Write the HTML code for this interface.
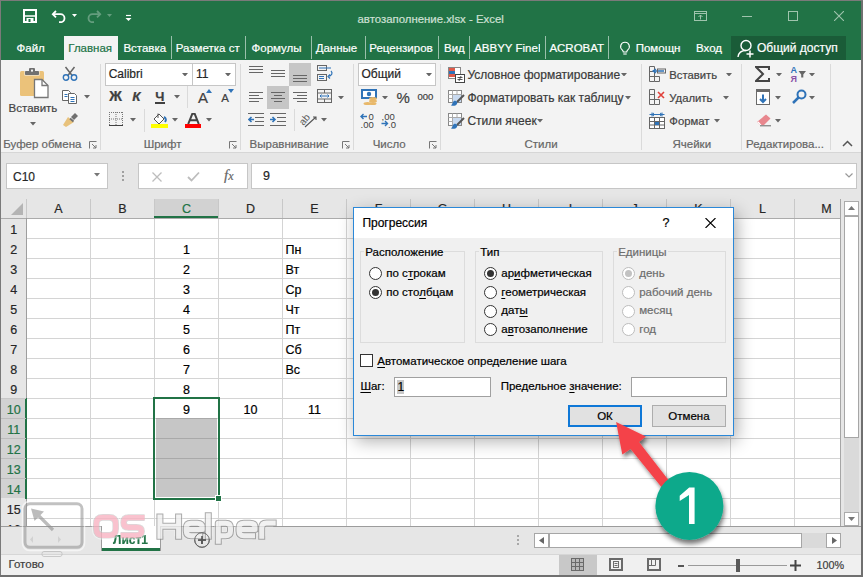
<!DOCTYPE html><html><head><meta charset="utf-8"><style>
*{margin:0;padding:0;box-sizing:border-box}
html,body{width:863px;height:577px;overflow:hidden;background:#e6e6e6;font-family:"Liberation Sans",sans-serif;position:relative}
.a{position:absolute}
.t{position:absolute;white-space:nowrap;line-height:1;-webkit-text-stroke:.2px currentColor}
u{text-decoration:underline;text-underline-offset:1.5px}
</style></head><body>
<div class="a" style="left:0px;top:0px;width:863px;height:60px;background:#217346"></div>
<svg class="a" style="left:23px;top:9px;" width="14" height="14" viewBox="0 0 14 14"><path d="M1 1H13V13H1Z" fill="none" stroke="#fff" stroke-width="2"/><path d="M1 7H13" stroke="#fff" stroke-width="1.5"/><rect x="3.5" y="9" width="7" height="4" fill="#fff"/><rect x="5.5" y="10" width="2" height="3" fill="#217346"/></svg>
<svg class="a" style="left:51px;top:9px;" width="16" height="14" viewBox="0 0 16 14"><path d="M5 2L1.8 5.2L5 8.4" fill="none" stroke="#fff" stroke-width="1.8"/><path d="M2 5.2H9.5A4 4 0 0 1 9.5 13.2H8" fill="none" stroke="#fff" stroke-width="1.8"/></svg>
<svg class="a" style="left:72.0px;top:14.0px;" width="5" height="3" viewBox="0 0 5 3"><path d="M0 0H5L2.5 3Z" fill="#fff"/></svg>
<svg class="a" style="left:86px;top:9px;opacity:.3" width="16" height="14" viewBox="0 0 16 14"><path d="M11 2L14.2 5.2L11 8.4" fill="none" stroke="#fff" stroke-width="1.8"/><path d="M14 5.2H6.5A4 4 0 0 0 6.5 13.2H8" fill="none" stroke="#fff" stroke-width="1.8"/></svg>
<svg class="a" style="left:107px;top:14px;opacity:.3" width="5" height="3" viewBox="0 0 5 3"><path d="M0 0H5L2.5 3Z" fill="#fff"/></svg>
<svg class="a" style="left:125px;top:14px;" width="7" height="8" viewBox="0 0 7 8"><path d="M1 1.5H6" stroke="#fff" stroke-width="1.2"/><path d="M.5 4H6.5L3.5 7Z" fill="#fff"/></svg>
<div class="t" style="left:357.50px;top:14.35px;font-size:11.4px;color:#cfe0d5;font-weight:400;">автозаполнение.xlsx - Excel</div>
<svg class="a" style="left:694px;top:11px;" width="13" height="10" viewBox="0 0 13 10"><rect x=".5" y=".5" width="12" height="9" fill="none" stroke="#9fc4ad"/><path d="M.5 2.5H12.5" stroke="#9fc4ad"/><path d="M6.5 8.5V4M4.5 6L6.5 4L8.5 6" fill="none" stroke="#9fc4ad"/></svg>
<div class="a" style="left:742px;top:16px;width:10px;height:1px;background:#9fc4ad"></div>
<div class="a" style="left:788px;top:11px;width:10px;height:10px;border:1px solid #9fc4ad"></div>
<svg class="a" style="left:834px;top:11px;" width="10" height="10" viewBox="0 0 10 10"><path d="M0 0L10 10M10 0L0 10" stroke="#9fc4ad" stroke-width="1.1"/></svg>
<div class="a" style="left:64px;top:36px;width:54px;height:25px;background:#f3f3f3"></div>
<div class="t" style="left:16.50px;top:42.87px;font-size:11.5px;color:#fff;font-weight:400;">Файл</div>
<div class="t" style="left:68.30px;top:42.87px;font-size:11.5px;color:#217346;font-weight:400;">Главная</div>
<div class="t" style="left:123.40px;top:42.87px;font-size:11.5px;color:#fff;font-weight:400;">Вставка</div>
<div class="a" style="left:174.8px;top:36px;width:65.69999999999999px;height:24px;overflow:hidden">
<div class="t" style="left:1px;top:6.87px;font-size:11.5px;color:#fff">Разметка страницы</div></div>
<div class="t" style="left:251.50px;top:42.87px;font-size:11.5px;color:#fff;font-weight:400;">Формулы</div>
<div class="t" style="left:315.70px;top:42.87px;font-size:11.5px;color:#fff;font-weight:400;">Данные</div>
<div class="a" style="left:368.3px;top:36px;width:64.69999999999999px;height:24px;overflow:hidden">
<div class="t" style="left:1px;top:6.87px;font-size:11.5px;color:#fff">Рецензирование</div></div>
<div class="t" style="left:444.00px;top:42.87px;font-size:11.5px;color:#fff;font-weight:400;">Вид</div>
<div class="a" style="left:473.2px;top:36px;width:66.80000000000001px;height:24px;overflow:hidden">
<div class="t" style="left:1px;top:6.87px;font-size:11.5px;color:#fff">ABBYY FineReader</div></div>
<div class="t" style="left:549.40px;top:42.87px;font-size:11.5px;color:#fff;font-weight:400;">ACROBAT</div>
<div class="a" style="left:634.7px;top:36px;width:46.799999999999955px;height:24px;overflow:hidden">
<div class="t" style="left:1px;top:6.87px;font-size:11.5px;color:#fff">Помощник</div></div>
<div class="t" style="left:696.00px;top:42.87px;font-size:11.5px;color:#fff;font-weight:400;">Вход</div>
<div class="a" style="left:170.5px;top:36px;width:1px;height:23px;background:rgba(255,255,255,.55)"></div>
<div class="a" style="left:244.5px;top:36px;width:1px;height:23px;background:rgba(255,255,255,.55)"></div>
<div class="a" style="left:310.5px;top:36px;width:1px;height:23px;background:rgba(255,255,255,.55)"></div>
<div class="a" style="left:364.5px;top:36px;width:1px;height:23px;background:rgba(255,255,255,.55)"></div>
<div class="a" style="left:438px;top:36px;width:1px;height:23px;background:rgba(255,255,255,.55)"></div>
<div class="a" style="left:469px;top:36px;width:1px;height:23px;background:rgba(255,255,255,.55)"></div>
<div class="a" style="left:544.5px;top:36px;width:1px;height:23px;background:rgba(255,255,255,.55)"></div>
<div class="a" style="left:608px;top:36px;width:1px;height:23px;background:rgba(255,255,255,.55)"></div>
<svg class="a" style="left:619px;top:41px;" width="12" height="15" viewBox="0 0 12 15"><path d="M6 1.2A4.3 4.3 0 0 0 3.2 8.8C4 9.6 4.3 10.2 4.3 11H7.7C7.7 10.2 8 9.6 8.8 8.8A4.3 4.3 0 0 0 6 1.2Z" fill="none" stroke="#fff" stroke-width="1.1"/><path d="M4.3 13H7.7" stroke="#fff" stroke-width="1.1"/></svg>
<div class="a" style="left:731px;top:36px;width:115px;height:24px;background:#1a5c38"></div>
<svg class="a" style="left:737px;top:39px;" width="18" height="19" viewBox="0 0 18 19"><circle cx="9" cy="6.5" r="5" fill="none" stroke="#fff" stroke-width="1.4"/><path d="M1 18C1.5 14 4.5 11.5 9 11.5" fill="none" stroke="#fff" stroke-width="1.4"/><path d="M13 11.5V18.5M9.5 15H16.5" stroke="#fff" stroke-width="1.5"/></svg>
<div class="t" style="left:757.00px;top:42.44px;font-size:12px;color:#fff;font-weight:400;">Общий доступ</div>
<div class="a" style="left:0px;top:60px;width:863px;height:93px;background:#f3f3f3"></div>
<div class="a" style="left:0px;top:152px;width:863px;height:1px;background:#d6d6d6"></div>
<div class="a" style="left:100px;top:64px;width:1px;height:86px;background:#dadada"></div>
<div class="a" style="left:240px;top:64px;width:1px;height:86px;background:#dadada"></div>
<div class="a" style="left:353px;top:64px;width:1px;height:86px;background:#dadada"></div>
<div class="a" style="left:440px;top:64px;width:1px;height:86px;background:#dadada"></div>
<div class="a" style="left:641px;top:64px;width:1px;height:86px;background:#dadada"></div>
<div class="a" style="left:741px;top:64px;width:1px;height:86px;background:#dadada"></div>
<div class="a" style="left:830px;top:64px;width:1px;height:86px;background:#dadada"></div>
<svg class="a" style="left:19px;top:66px;" width="31" height="33" viewBox="0 0 31 33"><rect x="1" y="5" width="24" height="25" rx="1.5" fill="#ebc27a"/><rect x="5.5" y="4.5" width="15" height="5" fill="#f3f3f3"/><rect x="6" y="5" width="14" height="4" rx=".8" fill="#707070"/><rect x="10" y="2" width="6" height="4" rx="1" fill="#707070"/><rect x="12" y="3.6" width="2" height="2" fill="#f3f3f3"/><path d="M15.5 13.5H23L29 19.5V31.5H15.5Z" fill="#fff" stroke="#777" stroke-width="1.3"/><path d="M23 13.5V19.5H29" fill="none" stroke="#777" stroke-width="1.3"/></svg>
<div class="t" style="left:8.60px;top:103.47px;font-size:11.5px;color:#444;font-weight:400;">Вставить</div>
<svg class="a" style="left:29.5px;top:122.25px;" width="6" height="3.5" viewBox="0 0 6 3.5"><path d="M0 0H6L3.0 3.5Z" fill="#666"/></svg>
<svg class="a" style="left:62px;top:66px;" width="16" height="15" viewBox="0 0 16 15"><path d="M3.5 1L10.5 10M12.5 1L5.5 10" stroke="#666" stroke-width="1.5"/><circle cx="4" cy="11.5" r="2.7" fill="none" stroke="#2f73b8" stroke-width="1.4"/><circle cx="12" cy="11.5" r="2.7" fill="none" stroke="#2f73b8" stroke-width="1.4"/></svg>
<svg class="a" style="left:62px;top:90px;" width="16" height="14" viewBox="0 0 16 14"><path d="M.5 .5H6.5L8.5 2.5V10.5H.5Z" fill="#fff" stroke="#666"/><path d="M6.5 3.5H12.5L14.5 5.5V13.5H6.5Z" fill="#fff" stroke="#666"/><path d="M2.5 4.5H5.5M2.5 6.5H5.5M8.5 7.5H12.5M8.5 9.5H12.5M8.5 11.5H12.5" stroke="#2f73b8"/></svg>
<svg class="a" style="left:83.7px;top:95.25px;" width="6" height="3.5" viewBox="0 0 6 3.5"><path d="M0 0H6L3.0 3.5Z" fill="#666"/></svg>
<svg class="a" style="left:62px;top:112px;" width="17" height="15" viewBox="0 0 17 15"><path d="M9 5L13 1L16 4L12 8Z" fill="#707070"/><path d="M1 13L6 5L12 10L4 15Z" fill="#e8c27c"/><path d="M8 6.5L11.5 9.5" stroke="#707070" stroke-width="2"/></svg>
<div class="t" style="left:-157.70px;width:400px;text-align:center;top:139.07px;font-size:11.5px;color:#666;font-weight:400;">Буфер обмена</div>
<svg class="a" style="left:88.5px;top:141px;" width="8" height="8" viewBox="0 0 8 8"><path d="M.5 7.5V.5H7.5" fill="none" stroke="#777"/><path d="M3 3L7 7M7 4V7H4" fill="none" stroke="#777"/></svg>
<div class="a" style="left:105px;top:63px;width:88px;height:23px;background:#fff;border:1px solid #c6c6c6"></div>
<div class="a" style="left:192px;top:63px;width:44px;height:23px;background:#fff;border:1px solid #c6c6c6"></div>
<div class="t" style="left:108.70px;top:68.34px;font-size:12px;color:#262626;font-weight:400;">Calibri</div>
<div class="t" style="left:196.00px;top:68.34px;font-size:12px;color:#262626;font-weight:400;">11</div>
<svg class="a" style="left:182.2px;top:72.75px;" width="6" height="3.5" viewBox="0 0 6 3.5"><path d="M0 0H6L3.0 3.5Z" fill="#666"/></svg>
<svg class="a" style="left:225.3px;top:72.75px;" width="6" height="3.5" viewBox="0 0 6 3.5"><path d="M0 0H6L3.0 3.5Z" fill="#666"/></svg>
<div class="t" style="left:109.30px;top:89.35px;font-size:14px;color:#404040;font-weight:700;">Ж</div>
<div class="t" style="left:132.30px;top:89.77px;font-size:13.5px;color:#404040;font-weight:700;font-style:italic">К</div>
<div class="t" style="left:155.30px;top:90.20px;font-size:13px;color:#404040;font-weight:700;">Ч</div>
<div class="a" style="left:155px;top:102px;width:10px;height:1.5px;background:#404040"></div>
<svg class="a" style="left:173.5px;top:95.25px;" width="6" height="3.5" viewBox="0 0 6 3.5"><path d="M0 0H6L3.0 3.5Z" fill="#666"/></svg>
<div class="a" style="left:187px;top:86px;width:1px;height:22px;background:#dadada"></div>
<div class="t" style="left:198.00px;top:90.10px;font-size:15px;color:#404040;font-weight:400;">A</div>
<svg class="a" style="left:206px;top:89px;" width="6" height="4" viewBox="0 0 6 4"><path d="M0 4L3 0L6 4Z" fill="#2f73b8"/></svg>
<div class="t" style="left:221.20px;top:93.07px;font-size:11.5px;color:#404040;font-weight:400;">A</div>
<svg class="a" style="left:228px;top:89px;" width="6" height="4" viewBox="0 0 6 4"><path d="M0 0L6 0L3 4Z" fill="#2f73b8"/></svg>
<svg class="a" style="left:109px;top:112px;" width="14" height="14" viewBox="0 0 14 14"><path d="M.5 0V13M13.5 0V13M7 0V13M0 .5H14M0 7H14" fill="none" stroke="#777" stroke-dasharray="1 1"/><path d="M0 13.5H14" stroke="#404040"/></svg>
<svg class="a" style="left:129.5px;top:118.25px;" width="6" height="3.5" viewBox="0 0 6 3.5"><path d="M0 0H6L3.0 3.5Z" fill="#666"/></svg>
<div class="a" style="left:143.5px;top:109px;width:1px;height:23px;background:#dadada"></div>
<svg class="a" style="left:151px;top:112px;" width="17" height="16" viewBox="0 0 17 16"><path d="M3 7L8 2L13 7L8 12Z" fill="#fff" stroke="#555"/><path d="M7 1.5V6" stroke="#555"/><path d="M13 5C15 6 15.5 8 14 10" fill="none" stroke="#2f73b8" stroke-width="2"/><rect x="0" y="12" width="17" height="4" fill="#ffff00"/></svg>
<svg class="a" style="left:172.0px;top:118.25px;" width="6" height="3.5" viewBox="0 0 6 3.5"><path d="M0 0H6L3.0 3.5Z" fill="#666"/></svg>
<svg class="a" style="left:187px;top:113px;" width="13" height="11" viewBox="0 0 13 11"><path d="M1.2 11L5.3 .8H7.7L11.8 11M3.3 7.3H9.7" fill="none" stroke="#444" stroke-width="2"/></svg>
<div class="a" style="left:185px;top:124px;width:16px;height:3.5px;background:#ff0000"></div>
<svg class="a" style="left:206.2px;top:118.25px;" width="6" height="3.5" viewBox="0 0 6 3.5"><path d="M0 0H6L3.0 3.5Z" fill="#666"/></svg>
<div class="t" style="left:-37.40px;width:400px;text-align:center;top:139.07px;font-size:11.5px;color:#666;font-weight:400;">Шрифт</div>
<svg class="a" style="left:229px;top:141px;" width="8" height="8" viewBox="0 0 8 8"><path d="M.5 7.5V.5H7.5" fill="none" stroke="#777"/><path d="M3 3L7 7M7 4V7H4" fill="none" stroke="#777"/></svg>
<div class="a" style="left:289px;top:63px;width:22px;height:23px;background:#c6c6c6"></div>
<div class="a" style="left:267px;top:86px;width:22px;height:23px;background:#c6c6c6"></div>
<div class="a" style="left:249px;top:66px;width:14px;height:1px;background:#666"></div>
<div class="a" style="left:249px;top:69px;width:14px;height:1px;background:#666"></div>
<div class="a" style="left:249px;top:72px;width:14px;height:1px;background:#666"></div>
<div class="a" style="left:271px;top:70px;width:14px;height:1px;background:#666"></div>
<div class="a" style="left:271px;top:73px;width:14px;height:1px;background:#666"></div>
<div class="a" style="left:271px;top:76px;width:14px;height:1px;background:#666"></div>
<div class="a" style="left:293px;top:75px;width:14px;height:1px;background:#666"></div>
<div class="a" style="left:293px;top:78px;width:14px;height:1px;background:#666"></div>
<div class="a" style="left:293px;top:81px;width:14px;height:1px;background:#666"></div>
<div class="a" style="left:249px;top:92px;width:14px;height:1px;background:#666"></div>
<div class="a" style="left:249px;top:95px;width:10px;height:1px;background:#666"></div>
<div class="a" style="left:249px;top:98px;width:14px;height:1px;background:#666"></div>
<div class="a" style="left:249px;top:101px;width:10px;height:1px;background:#666"></div>
<div class="a" style="left:271px;top:92px;width:14px;height:1px;background:#666"></div>
<div class="a" style="left:274px;top:95px;width:8px;height:1px;background:#666"></div>
<div class="a" style="left:271px;top:98px;width:14px;height:1px;background:#666"></div>
<div class="a" style="left:274px;top:101px;width:8px;height:1px;background:#666"></div>
<div class="a" style="left:293px;top:92px;width:14px;height:1px;background:#666"></div>
<div class="a" style="left:297px;top:95px;width:10px;height:1px;background:#666"></div>
<div class="a" style="left:293px;top:98px;width:14px;height:1px;background:#666"></div>
<div class="a" style="left:297px;top:101px;width:10px;height:1px;background:#666"></div>
<svg class="a" style="left:317px;top:65px;" width="17" height="16" viewBox="0 0 17 16"><rect x=".5" y=".5" width="9" height="5" fill="none" stroke="#666"/><rect x=".5" y="9.5" width="9" height="6" fill="none" stroke="#666"/><path d="M2 3H14" stroke="#2f73b8"/><path d="M2 11.5H7M2 13.5H7" stroke="#2f73b8"/><path d="M14 6C16 8 15 11 11 11.5M13 9.5L11 11.5L13 13.5" fill="none" stroke="#2f73b8" stroke-width="1.2"/></svg>
<svg class="a" style="left:317px;top:89px;" width="16" height="15" viewBox="0 0 16 15"><rect x=".5" y=".5" width="14" height="13" fill="none" stroke="#666"/><path d="M.5 4H14.5M.5 10H14.5M7.5 .5V4M7.5 10V13.5" stroke="#666"/><path d="M3 7H12" stroke="#2f73b8"/><path d="M4.5 5.5L3 7L4.5 8.5M10.5 5.5L12 7L10.5 8.5" fill="none" stroke="#2f73b8"/></svg>
<svg class="a" style="left:337.5px;top:95.55px;" width="6" height="3.5" viewBox="0 0 6 3.5"><path d="M0 0H6L3.0 3.5Z" fill="#666"/></svg>
<svg class="a" style="left:248px;top:113px;" width="17" height="13" viewBox="0 0 17 13"><path d="M0 .5H16M7 4.5H16M7 8.5H16M0 12.5H16" stroke="#666"/><path d="M1 6.5H6M3.5 4L1 6.5L3.5 9" fill="none" stroke="#2f73b8" stroke-width="1.6"/></svg>
<svg class="a" style="left:270px;top:113px;" width="17" height="13" viewBox="0 0 17 13"><path d="M0 .5H16M7 4.5H16M7 8.5H16M0 12.5H16" stroke="#666"/><path d="M0 6.5H5M2.5 4L5 6.5L2.5 9" fill="none" stroke="#2f73b8" stroke-width="1.6"/></svg>
<div class="a" style="left:293.5px;top:109px;width:1px;height:22px;background:#dadada"></div>
<svg class="a" style="left:300px;top:112px;" width="18" height="16" viewBox="0 0 18 16"><text x="0" y="0" font-size="10" font-family="Liberation Sans" fill="#555" transform="translate(3.5,14) rotate(-50)">ab</text><path d="M5 15L16 5M13 5H16V8" fill="none" stroke="#555" stroke-width="1.1"/></svg>
<svg class="a" style="left:320.6px;top:118.25px;" width="6" height="3.5" viewBox="0 0 6 3.5"><path d="M0 0H6L3.0 3.5Z" fill="#666"/></svg>
<div class="t" style="left:89.20px;width:400px;text-align:center;top:139.07px;font-size:11.5px;color:#666;font-weight:400;">Выравнивание</div>
<svg class="a" style="left:342px;top:141px;" width="8" height="8" viewBox="0 0 8 8"><path d="M.5 7.5V.5H7.5" fill="none" stroke="#777"/><path d="M3 3L7 7M7 4V7H4" fill="none" stroke="#777"/></svg>
<div class="a" style="left:358px;top:63px;width:78px;height:23px;background:#fff;border:1px solid #c6c6c6"></div>
<div class="t" style="left:361.50px;top:68.34px;font-size:12px;color:#262626;font-weight:400;">Общий</div>
<svg class="a" style="left:425.5px;top:72.75px;" width="6" height="3.5" viewBox="0 0 6 3.5"><path d="M0 0H6L3.0 3.5Z" fill="#666"/></svg>
<svg class="a" style="left:361px;top:89px;" width="17" height="17" viewBox="0 0 17 17"><rect x="1" y="1" width="14" height="8" fill="#fff" stroke="#2f73b8" stroke-width="2"/><circle cx="8" cy="5" r="2.2" fill="#2f73b8"/><ellipse cx="12" cy="9.5" rx="4" ry="1.6" fill="#e8b86a"/><ellipse cx="12" cy="12" rx="4" ry="1.6" fill="#e8b86a"/><ellipse cx="6.5" cy="14.5" rx="4" ry="1.6" fill="#e8b86a"/><ellipse cx="12" cy="14.5" rx="3.5" ry="1.6" fill="#e8b86a"/></svg>
<svg class="a" style="left:382.2px;top:95.65px;" width="6" height="3.5" viewBox="0 0 6 3.5"><path d="M0 0H6L3.0 3.5Z" fill="#666"/></svg>
<div class="t" style="left:396.50px;top:90.00px;font-size:15px;color:#404040;font-weight:400;">%</div>
<div class="t" style="left:417.50px;top:92.16px;font-size:9.5px;color:#404040;font-weight:400;">000</div>
<svg class="a" style="left:360px;top:112px;" width="18" height="16" viewBox="0 0 18 16"><path d="M1 4.5H7M3.5 2L1 4.5L3.5 7" fill="none" stroke="#2f73b8" stroke-width="1.4"/><text x="8.5" y="8" font-size="9.5" font-family="Liberation Sans" fill="#404040">0</text><text x="0.5" y="15.5" font-size="9.5" font-family="Liberation Sans" fill="#404040">,00</text></svg>
<svg class="a" style="left:381px;top:112px;" width="18" height="16" viewBox="0 0 18 16"><text x="0.5" y="8" font-size="9.5" font-family="Liberation Sans" fill="#404040">,00</text><path d="M0.5 11.5H6.5M4 9L6.5 11.5L4 14" fill="none" stroke="#2f73b8" stroke-width="1.4"/><text x="7" y="15.5" font-size="9.5" font-family="Liberation Sans" fill="#404040">,0</text></svg>
<div class="t" style="left:189.20px;width:400px;text-align:center;top:139.07px;font-size:11.5px;color:#666;font-weight:400;">Число</div>
<svg class="a" style="left:429px;top:141px;" width="8" height="8" viewBox="0 0 8 8"><path d="M.5 7.5V.5H7.5" fill="none" stroke="#777"/><path d="M3 3L7 7M7 4V7H4" fill="none" stroke="#777"/></svg>
<svg class="a" style="left:448px;top:67px;" width="17" height="16" viewBox="0 0 17 16"><rect x=".5" y=".5" width="12" height="11" fill="#fff" stroke="#888"/><rect x="1" y="1" width="6" height="3" fill="#e05a4a"/><rect x="1" y="4" width="6" height="3" fill="#2f73b8"/><rect x="1" y="7" width="6" height="3" fill="#e05a4a"/><rect x="7.5" y="7.5" width="9" height="8" fill="#fff" stroke="#444"/><path d="M9.5 10.5H14.5M9.5 12.5H14.5M13 9L11 14" stroke="#444" stroke-width=".9"/></svg>
<div class="t" style="left:467.40px;top:69.04px;font-size:12px;color:#3a3a3a;font-weight:400;">Условное форматирование</div>
<svg class="a" style="left:621.0px;top:72.75px;" width="6" height="3.5" viewBox="0 0 6 3.5"><path d="M0 0H6L3.0 3.5Z" fill="#666"/></svg>
<svg class="a" style="left:448px;top:90px;" width="17" height="16" viewBox="0 0 17 16"><rect x=".5" y=".5" width="13" height="12" fill="#fff" stroke="#888"/><path d="M.5 4.5H13.5M.5 8.5H13.5M4.5 .5V12.5M9 .5V12.5" stroke="#aaa"/><rect x="5" y="5" width="8" height="7" fill="#c9daf0"/><path d="M16 5L9 12" stroke="#555" stroke-width="2"/><path d="M6 11C8 10 10 12 9 14C8 16 5 16 3 15.5C5 14 4 12 6 11Z" fill="#2f73b8"/></svg>
<div class="t" style="left:467.40px;top:92.24px;font-size:12px;color:#3a3a3a;font-weight:400;">Форматировать как таблицу</div>
<svg class="a" style="left:625.0px;top:96.05px;" width="6" height="3.5" viewBox="0 0 6 3.5"><path d="M0 0H6L3.0 3.5Z" fill="#666"/></svg>
<svg class="a" style="left:448px;top:113px;" width="17" height="16" viewBox="0 0 17 16"><rect x=".5" y=".5" width="13" height="12" fill="#fff" stroke="#888"/><path d="M.5 4.5H13.5M.5 8.5H13.5M4.5 .5V12.5M9 .5V12.5" stroke="#aaa"/><rect x="5" y="5" width="8" height="7" fill="#c9daf0"/><path d="M16 5L9 12" stroke="#555" stroke-width="2"/><path d="M6 11C8 10 10 12 9 14C8 16 5 16 3 15.5C5 14 4 12 6 11Z" fill="#2f73b8"/></svg>
<div class="t" style="left:467.40px;top:115.44px;font-size:12px;color:#3a3a3a;font-weight:400;">Стили ячеек</div>
<svg class="a" style="left:537.0px;top:119.25px;" width="6" height="3.5" viewBox="0 0 6 3.5"><path d="M0 0H6L3.0 3.5Z" fill="#666"/></svg>
<div class="t" style="left:341.00px;width:400px;text-align:center;top:139.07px;font-size:11.5px;color:#666;font-weight:400;">Стили</div>
<svg class="a" style="left:649px;top:66px;" width="17" height="16" viewBox="0 0 17 16"><path d="M.5 .5H5.5V15.5H.5ZM.5 5.5H5.5M.5 10.5H5.5M5.5 10.5H10.5V15.5H5.5" fill="none" stroke="#666"/><path d="M4 5H15M7 3L4 5L7 7" fill="none" stroke="#2f73b8" stroke-width="1.3"/><rect x="8.5" y="3" width="8" height="4" fill="none" stroke="#666"/></svg>
<div class="t" style="left:669.30px;top:69.63px;font-size:11.3px;color:#444;font-weight:400;">Вставить</div>
<svg class="a" style="left:726.3px;top:72.75px;" width="6" height="3.5" viewBox="0 0 6 3.5"><path d="M0 0H6L3.0 3.5Z" fill="#666"/></svg>
<svg class="a" style="left:649px;top:89px;" width="17" height="16" viewBox="0 0 17 16"><path d="M.5 .5H5.5V15.5H.5ZM.5 5.5H5.5M.5 10.5H5.5M5.5 10.5H10.5V15.5H5.5" fill="none" stroke="#666"/><path d="M9 3L15 9M15 3L9 9" stroke="#e0403a" stroke-width="1.6"/></svg>
<div class="t" style="left:669.30px;top:92.83px;font-size:11.3px;color:#444;font-weight:400;">Удалить</div>
<svg class="a" style="left:722.5px;top:96.05px;" width="6" height="3.5" viewBox="0 0 6 3.5"><path d="M0 0H6L3.0 3.5Z" fill="#666"/></svg>
<svg class="a" style="left:649px;top:112px;" width="17" height="17" viewBox="0 0 17 17"><path d="M.5 2.5H15.5M3 .5V4.5M13 .5V4.5M5 1L3 2.5L5 4M11 1L13 2.5L11 4" fill="none" stroke="#2f73b8"/><rect x=".5" y="5.5" width="15" height="11" fill="#fff" stroke="#666"/><path d="M.5 9.5H15.5M.5 13H15.5M5.5 5.5V16.5M10.5 5.5V16.5" stroke="#666"/><rect x="6" y="10" width="4" height="3" fill="#2f73b8"/></svg>
<div class="t" style="left:669.30px;top:116.03px;font-size:11.3px;color:#444;font-weight:400;">Формат</div>
<svg class="a" style="left:714.0px;top:119.25px;" width="6" height="3.5" viewBox="0 0 6 3.5"><path d="M0 0H6L3.0 3.5Z" fill="#666"/></svg>
<div class="t" style="left:491.80px;width:400px;text-align:center;top:139.07px;font-size:11.5px;color:#666;font-weight:400;">Ячейки</div>
<svg class="a" style="left:755px;top:66px;" width="16" height="16" viewBox="0 0 16 16"><path d="M1 1H14V4M14 1H1L8 8L1 15H14V12" fill="none" stroke="#444" stroke-width="2"/></svg>
<svg class="a" style="left:776.0px;top:72.75px;" width="6" height="3.5" viewBox="0 0 6 3.5"><path d="M0 0H6L3.0 3.5Z" fill="#666"/></svg>
<svg class="a" style="left:789px;top:65px;" width="19" height="18" viewBox="0 0 19 18"><text x="1.5" y="7.5" font-size="9" font-weight="700" font-family="Liberation Sans" fill="#2f73b8">A</text><text x="1.5" y="16.8" font-size="9" font-weight="700" font-family="Liberation Sans" fill="#8a52a8">Я</text><path d="M9.5 6H17L14.3 9.5V12.5H12.2V9.5Z" fill="#666"/></svg>
<svg class="a" style="left:809.0px;top:72.75px;" width="6" height="3.5" viewBox="0 0 6 3.5"><path d="M0 0H6L3.0 3.5Z" fill="#666"/></svg>
<svg class="a" style="left:756px;top:89px;" width="15" height="16" viewBox="0 0 15 16"><rect x=".5" y=".5" width="13" height="15" fill="#fff" stroke="#6a6a6a"/><rect x="0" y="0" width="14" height="3" fill="#6a6a6a"/><path d="M7 5.5V13M4 10L7 13L10 10" fill="none" stroke="#2f73b8" stroke-width="2"/></svg>
<svg class="a" style="left:774.5px;top:96.05px;" width="6" height="3.5" viewBox="0 0 6 3.5"><path d="M0 0H6L3.0 3.5Z" fill="#666"/></svg>
<svg class="a" style="left:792px;top:89px;" width="15" height="15" viewBox="0 0 15 15"><circle cx="9.5" cy="5.5" r="4" fill="none" stroke="#2f73b8" stroke-width="2"/><path d="M6.5 8.5L1 14" stroke="#2f73b8" stroke-width="2.5"/></svg>
<svg class="a" style="left:809.0px;top:96.05px;" width="6" height="3.5" viewBox="0 0 6 3.5"><path d="M0 0H6L3.0 3.5Z" fill="#666"/></svg>
<svg class="a" style="left:755px;top:113px;" width="17" height="14" viewBox="0 0 17 14"><path d="M11 1.5L15.5 5.5L9 12H5L2 9Z" fill="#e8878e"/><path d="M2 9L5 12H6.5L3.5 8.5Z" fill="#fff"/><path d="M5 12.8H16" stroke="#666"/></svg>
<svg class="a" style="left:774.5px;top:119.25px;" width="6" height="3.5" viewBox="0 0 6 3.5"><path d="M0 0H6L3.0 3.5Z" fill="#666"/></svg>
<div class="t" style="left:585.00px;width:400px;text-align:center;top:139.07px;font-size:11.5px;color:#666;font-weight:400;">Редактирова...</div>
<svg class="a" style="left:842px;top:140px;" width="11" height="7" viewBox="0 0 11 7"><path d="M1 6L5.5 1.5L10 6" fill="none" stroke="#555" stroke-width="1.5"/></svg>
<div class="a" style="left:6px;top:163px;width:102px;height:26px;background:#fff;border:1px solid #c6c6c6"></div>
<div class="t" style="left:13.00px;top:170.84px;font-size:12px;color:#262626;font-weight:400;">C10</div>
<svg class="a" style="left:94.0px;top:173.25px;" width="6" height="3.5" viewBox="0 0 6 3.5"><path d="M0 0H6L3.0 3.5Z" fill="#777"/></svg>
<div class="a" style="left:122px;top:171px;width:2px;height:2px;background:#a0a0a0"></div>
<div class="a" style="left:122px;top:175px;width:2px;height:2px;background:#a0a0a0"></div>
<div class="a" style="left:122px;top:179px;width:2px;height:2px;background:#a0a0a0"></div>
<div class="a" style="left:138px;top:163px;width:110px;height:26px;background:#fff;border:1px solid #c6c6c6"></div>
<svg class="a" style="left:152px;top:172px;" width="10" height="10" viewBox="0 0 10 10"><path d="M.5 .5L9.5 9.5M9.5 .5L.5 9.5" stroke="#bdbdbd" stroke-width="1.3"/></svg>
<svg class="a" style="left:187px;top:171px;" width="13" height="11" viewBox="0 0 13 11"><path d="M1 6L4.5 9.5L12 1.5" fill="none" stroke="#bdbdbd" stroke-width="1.8"/></svg>
<div class="t" style="left:224.00px;top:168.30px;font-size:15px;color:#666;font-weight:400;font-family:Liberation Serif"><i>f</i><i style="font-size:12px;margin-left:0px">x</i></div>
<div class="a" style="left:251px;top:163px;width:606px;height:26px;background:#fff;border:1px solid #c6c6c6"></div>
<div class="t" style="left:263.00px;top:170.42px;font-size:12.5px;color:#262626;font-weight:400;">9</div>
<svg class="a" style="left:845px;top:173px;" width="8" height="5" viewBox="0 0 8 5"><path d="M.5 .5L4 4L7.5 .5" fill="none" stroke="#999" stroke-width="1.2"/></svg>
<div class="a" style="left:0px;top:199px;width:840px;height:19px;background:#e6e6e6"></div>
<div class="a" style="left:0px;top:218px;width:26px;height:308px;background:#e6e6e6"></div>
<div class="a" style="left:26px;top:218px;width:814px;height:308px;background:#fff"></div>
<div class="a" style="left:154px;top:199px;width:64px;height:19px;background:#d2d2d2"></div>
<div class="a" style="left:0px;top:398px;width:26px;height:100px;background:#d2d2d2"></div>
<svg class="a" style="left:11px;top:203px;" width="12" height="12" viewBox="0 0 12 12"><path d="M12 0V12H0Z" fill="#b4b4b4"/></svg>
<div class="a" style="left:90px;top:199px;width:1px;height:19px;background:#c8c8c8"></div>
<div class="a" style="left:154px;top:199px;width:1px;height:19px;background:#c8c8c8"></div>
<div class="a" style="left:218px;top:199px;width:1px;height:19px;background:#c8c8c8"></div>
<div class="a" style="left:282px;top:199px;width:1px;height:19px;background:#c8c8c8"></div>
<div class="a" style="left:346px;top:199px;width:1px;height:19px;background:#c8c8c8"></div>
<div class="a" style="left:410px;top:199px;width:1px;height:19px;background:#c8c8c8"></div>
<div class="a" style="left:474px;top:199px;width:1px;height:19px;background:#c8c8c8"></div>
<div class="a" style="left:538px;top:199px;width:1px;height:19px;background:#c8c8c8"></div>
<div class="a" style="left:602px;top:199px;width:1px;height:19px;background:#c8c8c8"></div>
<div class="a" style="left:666px;top:199px;width:1px;height:19px;background:#c8c8c8"></div>
<div class="a" style="left:730px;top:199px;width:1px;height:19px;background:#c8c8c8"></div>
<div class="a" style="left:794px;top:199px;width:1px;height:19px;background:#c8c8c8"></div>
<div class="a" style="left:26px;top:199px;width:1px;height:19px;background:#c8c8c8"></div>
<div class="a" style="left:0px;top:218px;width:840px;height:1px;background:#ababab"></div>
<div class="a" style="left:154px;top:216px;width:64px;height:2px;background:#217346"></div>
<div class="a" style="left:26px;top:218px;width:1px;height:308px;background:#9e9e9e"></div>
<div class="a" style="left:25px;top:398px;width:2px;height:101px;background:#217346"></div>
<div class="t" style="left:-141.50px;width:400px;text-align:center;top:203.42px;font-size:12.5px;color:#262626;font-weight:400;">A</div>
<div class="t" style="left:-77.50px;width:400px;text-align:center;top:203.42px;font-size:12.5px;color:#262626;font-weight:400;">B</div>
<div class="t" style="left:-13.50px;width:400px;text-align:center;top:203.42px;font-size:12.5px;color:#217346;font-weight:400;">C</div>
<div class="t" style="left:50.50px;width:400px;text-align:center;top:203.42px;font-size:12.5px;color:#262626;font-weight:400;">D</div>
<div class="t" style="left:114.50px;width:400px;text-align:center;top:203.42px;font-size:12.5px;color:#262626;font-weight:400;">E</div>
<div class="t" style="left:178.50px;width:400px;text-align:center;top:203.42px;font-size:12.5px;color:#262626;font-weight:400;">F</div>
<div class="t" style="left:242.50px;width:400px;text-align:center;top:203.42px;font-size:12.5px;color:#262626;font-weight:400;">G</div>
<div class="t" style="left:306.50px;width:400px;text-align:center;top:203.42px;font-size:12.5px;color:#262626;font-weight:400;">H</div>
<div class="t" style="left:370.50px;width:400px;text-align:center;top:203.42px;font-size:12.5px;color:#262626;font-weight:400;">I</div>
<div class="t" style="left:434.50px;width:400px;text-align:center;top:203.42px;font-size:12.5px;color:#262626;font-weight:400;">J</div>
<div class="t" style="left:498.50px;width:400px;text-align:center;top:203.42px;font-size:12.5px;color:#262626;font-weight:400;">K</div>
<div class="t" style="left:562.50px;width:400px;text-align:center;top:203.42px;font-size:12.5px;color:#262626;font-weight:400;">L</div>
<div class="t" style="left:626.50px;width:400px;text-align:center;top:203.42px;font-size:12.5px;color:#262626;font-weight:400;">M</div>
<div class="a" style="left:90px;top:219px;width:1px;height:307px;background:#d4d4d4"></div>
<div class="a" style="left:154px;top:219px;width:1px;height:307px;background:#d4d4d4"></div>
<div class="a" style="left:218px;top:219px;width:1px;height:307px;background:#d4d4d4"></div>
<div class="a" style="left:282px;top:219px;width:1px;height:307px;background:#d4d4d4"></div>
<div class="a" style="left:346px;top:219px;width:1px;height:307px;background:#d4d4d4"></div>
<div class="a" style="left:410px;top:219px;width:1px;height:307px;background:#d4d4d4"></div>
<div class="a" style="left:474px;top:219px;width:1px;height:307px;background:#d4d4d4"></div>
<div class="a" style="left:538px;top:219px;width:1px;height:307px;background:#d4d4d4"></div>
<div class="a" style="left:602px;top:219px;width:1px;height:307px;background:#d4d4d4"></div>
<div class="a" style="left:666px;top:219px;width:1px;height:307px;background:#d4d4d4"></div>
<div class="a" style="left:730px;top:219px;width:1px;height:307px;background:#d4d4d4"></div>
<div class="a" style="left:794px;top:219px;width:1px;height:307px;background:#d4d4d4"></div>
<div class="a" style="left:27px;top:238px;width:813px;height:1px;background:#d4d4d4"></div>
<div class="a" style="left:0px;top:238px;width:26px;height:1px;#c8c8c8"></div>
<div class="a" style="left:27px;top:258px;width:813px;height:1px;background:#d4d4d4"></div>
<div class="a" style="left:0px;top:258px;width:26px;height:1px;#c8c8c8"></div>
<div class="a" style="left:27px;top:278px;width:813px;height:1px;background:#d4d4d4"></div>
<div class="a" style="left:0px;top:278px;width:26px;height:1px;#c8c8c8"></div>
<div class="a" style="left:27px;top:298px;width:813px;height:1px;background:#d4d4d4"></div>
<div class="a" style="left:0px;top:298px;width:26px;height:1px;#c8c8c8"></div>
<div class="a" style="left:27px;top:318px;width:813px;height:1px;background:#d4d4d4"></div>
<div class="a" style="left:0px;top:318px;width:26px;height:1px;#c8c8c8"></div>
<div class="a" style="left:27px;top:338px;width:813px;height:1px;background:#d4d4d4"></div>
<div class="a" style="left:0px;top:338px;width:26px;height:1px;#c8c8c8"></div>
<div class="a" style="left:27px;top:358px;width:813px;height:1px;background:#d4d4d4"></div>
<div class="a" style="left:0px;top:358px;width:26px;height:1px;#c8c8c8"></div>
<div class="a" style="left:27px;top:378px;width:813px;height:1px;background:#d4d4d4"></div>
<div class="a" style="left:0px;top:378px;width:26px;height:1px;#c8c8c8"></div>
<div class="a" style="left:27px;top:398px;width:813px;height:1px;background:#d4d4d4"></div>
<div class="a" style="left:0px;top:398px;width:26px;height:1px;#c8c8c8"></div>
<div class="a" style="left:27px;top:418px;width:813px;height:1px;background:#d4d4d4"></div>
<div class="a" style="left:0px;top:418px;width:26px;height:1px;background:#bcbcbc"></div>
<div class="a" style="left:27px;top:438px;width:813px;height:1px;background:#d4d4d4"></div>
<div class="a" style="left:0px;top:438px;width:26px;height:1px;background:#bcbcbc"></div>
<div class="a" style="left:27px;top:458px;width:813px;height:1px;background:#d4d4d4"></div>
<div class="a" style="left:0px;top:458px;width:26px;height:1px;background:#bcbcbc"></div>
<div class="a" style="left:27px;top:478px;width:813px;height:1px;background:#d4d4d4"></div>
<div class="a" style="left:0px;top:478px;width:26px;height:1px;background:#bcbcbc"></div>
<div class="a" style="left:27px;top:498px;width:813px;height:1px;background:#d4d4d4"></div>
<div class="a" style="left:0px;top:498px;width:26px;height:1px;#c8c8c8"></div>
<div class="a" style="left:27px;top:518px;width:813px;height:1px;background:#d4d4d4"></div>
<div class="a" style="left:0px;top:518px;width:26px;height:1px;#c8c8c8"></div>
<div class="a" style="left:0px;top:398px;width:26px;height:1px;background:#c8c8c8"></div>
<div class="a" style="left:840px;top:218px;width:1px;height:308px;background:#c8c8c8"></div>
<div class="t" style="left:-186.20px;width:400px;text-align:center;top:223.92px;font-size:12.5px;color:#262626;font-weight:400;">1</div>
<div class="t" style="left:-186.20px;width:400px;text-align:center;top:243.92px;font-size:12.5px;color:#262626;font-weight:400;">2</div>
<div class="t" style="left:-186.20px;width:400px;text-align:center;top:263.92px;font-size:12.5px;color:#262626;font-weight:400;">3</div>
<div class="t" style="left:-186.20px;width:400px;text-align:center;top:283.92px;font-size:12.5px;color:#262626;font-weight:400;">4</div>
<div class="t" style="left:-186.20px;width:400px;text-align:center;top:303.92px;font-size:12.5px;color:#262626;font-weight:400;">5</div>
<div class="t" style="left:-186.20px;width:400px;text-align:center;top:323.92px;font-size:12.5px;color:#262626;font-weight:400;">6</div>
<div class="t" style="left:-186.20px;width:400px;text-align:center;top:343.92px;font-size:12.5px;color:#262626;font-weight:400;">7</div>
<div class="t" style="left:-186.20px;width:400px;text-align:center;top:363.92px;font-size:12.5px;color:#262626;font-weight:400;">8</div>
<div class="t" style="left:-186.20px;width:400px;text-align:center;top:383.92px;font-size:12.5px;color:#262626;font-weight:400;">9</div>
<div class="t" style="left:-186.20px;width:400px;text-align:center;top:403.92px;font-size:12.5px;color:#217346;font-weight:400;">10</div>
<div class="t" style="left:-186.20px;width:400px;text-align:center;top:423.92px;font-size:12.5px;color:#217346;font-weight:400;">11</div>
<div class="t" style="left:-186.20px;width:400px;text-align:center;top:443.92px;font-size:12.5px;color:#217346;font-weight:400;">12</div>
<div class="t" style="left:-186.20px;width:400px;text-align:center;top:463.92px;font-size:12.5px;color:#217346;font-weight:400;">13</div>
<div class="t" style="left:-186.20px;width:400px;text-align:center;top:483.92px;font-size:12.5px;color:#217346;font-weight:400;">14</div>
<div class="t" style="left:-186.20px;width:400px;text-align:center;top:503.92px;font-size:12.5px;color:#262626;font-weight:400;">15</div>
<div class="t" style="left:-186.20px;width:400px;text-align:center;top:523.92px;font-size:12.5px;color:#262626;font-weight:400;">16</div>
<div class="t" style="left:-13.50px;width:400px;text-align:center;top:243.92px;font-size:12.5px;color:#000;font-weight:400;">1</div>
<div class="t" style="left:-13.50px;width:400px;text-align:center;top:263.92px;font-size:12.5px;color:#000;font-weight:400;">2</div>
<div class="t" style="left:-13.50px;width:400px;text-align:center;top:283.92px;font-size:12.5px;color:#000;font-weight:400;">3</div>
<div class="t" style="left:-13.50px;width:400px;text-align:center;top:303.92px;font-size:12.5px;color:#000;font-weight:400;">4</div>
<div class="t" style="left:-13.50px;width:400px;text-align:center;top:323.92px;font-size:12.5px;color:#000;font-weight:400;">5</div>
<div class="t" style="left:-13.50px;width:400px;text-align:center;top:343.92px;font-size:12.5px;color:#000;font-weight:400;">6</div>
<div class="t" style="left:-13.50px;width:400px;text-align:center;top:363.92px;font-size:12.5px;color:#000;font-weight:400;">7</div>
<div class="t" style="left:-13.50px;width:400px;text-align:center;top:383.92px;font-size:12.5px;color:#000;font-weight:400;">8</div>
<div class="t" style="left:-13.50px;width:400px;text-align:center;top:403.92px;font-size:12.5px;color:#000;font-weight:400;">9</div>
<div class="t" style="left:285.50px;top:243.92px;font-size:12.5px;color:#000;font-weight:400;">Пн</div>
<div class="t" style="left:285.50px;top:263.92px;font-size:12.5px;color:#000;font-weight:400;">Вт</div>
<div class="t" style="left:285.50px;top:283.92px;font-size:12.5px;color:#000;font-weight:400;">Ср</div>
<div class="t" style="left:285.50px;top:303.92px;font-size:12.5px;color:#000;font-weight:400;">Чт</div>
<div class="t" style="left:285.50px;top:323.92px;font-size:12.5px;color:#000;font-weight:400;">Пт</div>
<div class="t" style="left:285.50px;top:343.92px;font-size:12.5px;color:#000;font-weight:400;">Сб</div>
<div class="t" style="left:285.50px;top:363.92px;font-size:12.5px;color:#000;font-weight:400;">Вс</div>
<div class="t" style="left:50.50px;width:400px;text-align:center;top:403.92px;font-size:12.5px;color:#000;font-weight:400;">10</div>
<div class="t" style="left:114.50px;width:400px;text-align:center;top:403.92px;font-size:12.5px;color:#000;font-weight:400;">11</div>
<div class="a" style="left:156px;top:418px;width:61px;height:79px;background:#c6c6c6"></div>
<div class="a" style="left:156px;top:418px;width:61px;height:1px;background:#a9a9a9"></div>
<div class="a" style="left:156px;top:438px;width:61px;height:1px;background:#a9a9a9"></div>
<div class="a" style="left:156px;top:458px;width:61px;height:1px;background:#a9a9a9"></div>
<div class="a" style="left:156px;top:478px;width:61px;height:1px;background:#a9a9a9"></div>
<div class="a" style="left:153px;top:397px;width:67px;height:103px;border:2px solid #217346"></div>
<div class="a" style="left:215px;top:495px;width:7px;height:7px;background:#fff"></div>
<div class="a" style="left:216px;top:496px;width:5px;height:5px;background:#217346"></div>
<div class="a" style="left:841px;top:199px;width:20px;height:327px;background:#e6e6e6"></div>
<div class="a" style="left:840px;top:199px;width:1px;height:327px;background:#a6a6a6"></div>
<div class="a" style="left:844px;top:201px;width:15px;height:15px;background:#fff;border:1px solid #ababab"></div>
<svg class="a" style="left:848px;top:206px;" width="7" height="4" viewBox="0 0 7 4"><path d="M0 4H7L3.5 0Z" fill="#777"/></svg>
<div class="a" style="left:844px;top:216px;width:15px;height:222px;background:#fff;border:1px solid #a6a6a6"></div>
<div class="a" style="left:844px;top:438px;width:15px;height:74px;background:#dadada"></div>
<div class="a" style="left:844px;top:512px;width:15px;height:14px;background:#fff;border:1px solid #ababab"></div>
<svg class="a" style="left:848px;top:517px;" width="7" height="4" viewBox="0 0 7 4"><path d="M0 0H7L3.5 4Z" fill="#777"/></svg>
<div class="a" style="left:0px;top:526px;width:863px;height:28px;background:#e6e6e6"></div>
<div class="a" style="left:0px;top:526px;width:863px;height:1px;background:#9c9c9c"></div>
<div class="a" style="left:101px;top:526px;width:60px;height:25px;background:#fff;border-left:1px solid #9c9c9c;border-right:1px solid #9c9c9c"></div>
<div class="a" style="left:102px;top:548px;width:58px;height:3px;background:#217346"></div>
<div class="t" style="left:-69.50px;width:400px;text-align:center;top:533.54px;font-size:12px;color:#217346;font-weight:700;transform:scaleY(1.05)">Лист1</div>
<svg class="a" style="left:194px;top:532px;" width="16" height="16" viewBox="0 0 16 16"><circle cx="8" cy="8" r="7.3" fill="none" stroke="#666" stroke-width="1"/><path d="M8 4V12M4 8H12" stroke="#555" stroke-width="1.7"/></svg>
<div class="a" style="left:517px;top:535px;width:2px;height:2px;background:#a8a8a8"></div>
<div class="a" style="left:517px;top:539px;width:2px;height:2px;background:#a8a8a8"></div>
<div class="a" style="left:517px;top:543px;width:2px;height:2px;background:#a8a8a8"></div>
<div class="a" style="left:534px;top:533px;width:15px;height:15px;background:#fff;border:1px solid #a6a6a6"></div>
<svg class="a" style="left:539px;top:537px;" width="5" height="7" viewBox="0 0 5 7"><path d="M5 0V7L0 3.5Z" fill="#666"/></svg>
<div class="a" style="left:548px;top:533px;width:254px;height:15px;background:#fff;border:1px solid #a6a6a6;border-left:2px solid #a6a6a6"></div>
<div class="a" style="left:802px;top:533px;width:24px;height:15px;background:#dadada"></div>
<div class="a" style="left:826px;top:533px;width:15px;height:15px;background:#fff;border:1px solid #a6a6a6"></div>
<svg class="a" style="left:832px;top:537px;" width="5" height="7" viewBox="0 0 5 7"><path d="M0 0V7L5 3.5Z" fill="#666"/></svg>
<div class="a" style="left:0px;top:554px;width:863px;height:23px;background:#f0f0f0"></div>
<div class="a" style="left:0px;top:554px;width:863px;height:1px;background:#d6d6d6"></div>
<div class="t" style="left:8.50px;top:559.27px;font-size:11.5px;color:#404040;font-weight:400;">Готово</div>
<div class="a" style="left:559px;top:555px;width:38px;height:21px;background:#c8c8c8"></div>
<svg class="a" style="left:571px;top:558px;" width="13" height="13" viewBox="0 0 13 13"><rect width="13" height="13" fill="#6a6a6a"/><g fill="#b8b8b8"><rect x="1" y="1" width="3" height="3"/><rect x="5" y="1" width="3" height="3"/><rect x="9" y="1" width="3" height="3"/><rect x="1" y="5" width="3" height="3"/><rect x="5" y="5" width="3" height="3"/><rect x="9" y="5" width="3" height="3"/><rect x="1" y="9" width="3" height="3"/><rect x="5" y="9" width="3" height="3"/><rect x="9" y="9" width="3" height="3"/></g></svg>
<svg class="a" style="left:609px;top:558px;" width="14" height="13" viewBox="0 0 14 13"><rect x="1" y="1" width="12" height="11" fill="none" stroke="#6a6a6a" stroke-width="2"/><rect x="4.5" y="3.5" width="5" height="6" fill="none" stroke="#6a6a6a"/><path d="M5.5 5.5H8.5M5.5 7.5H8.5" stroke="#6a6a6a"/></svg>
<svg class="a" style="left:647px;top:558px;" width="14" height="13" viewBox="0 0 14 13"><rect x="1" y="1" width="12" height="11" fill="none" stroke="#6a6a6a" stroke-width="2"/><path d="M1 7.5H8.5V1M4.5 1V7" fill="none" stroke="#6a6a6a"/></svg>
<div class="a" style="left:678px;top:565px;width:6px;height:2px;background:#555"></div>
<div class="a" style="left:688px;top:565px;width:99px;height:1px;background:#9a9a9a"></div>
<div class="a" style="left:736px;top:559px;width:4px;height:13px;background:#5a5a5a"></div>
<svg class="a" style="left:790px;top:560px;" width="11" height="11" viewBox="0 0 11 11"><path d="M5.5 0V11M0 5.5H11" stroke="#444" stroke-width="2"/></svg>
<div class="t" style="left:816.50px;top:560.36px;font-size:10.8px;color:#404040;font-weight:400;">100%</div>
<div class="a" style="left:0px;top:0px;width:1px;height:577px;background:#7a7a7a"></div>
<div class="a" style="left:861px;top:0px;width:2px;height:577px;background:#707070"></div>
<div class="a" style="left:0px;top:575px;width:863px;height:2px;background:#707070"></div>
<div class="a" style="left:0px;top:0px;width:863px;height:1px;background:#7a7a7a"></div>
<div class="a" style="left:353px;top:207px;width:381px;height:229px;background:#f0f0f0;border:1px solid #2b88d8;box-shadow:3px 5px 16px rgba(0,0,0,.32)"></div>
<div class="a" style="left:354px;top:208px;width:379px;height:30px;background:#fff"></div>
<div class="t" style="left:362.40px;top:217.14px;font-size:12px;color:#000;font-weight:400;">Прогрессия</div>
<div class="t" style="left:662.50px;top:216.72px;font-size:12.5px;color:#000;font-weight:400;">?</div>
<svg class="a" style="left:705px;top:218px;" width="11" height="10" viewBox="0 0 11 10"><path d="M.5 0L10.5 10M10.5 0L.5 10" stroke="#000" stroke-width="1.1"/></svg>
<div class="a" style="left:360px;top:251px;width:105px;height:92px;border:1px solid #dcdcdc"></div>
<div class="t" style="left:364.3px;top:247.27px;font-size:11.5px;color:#000;background:#f0f0f0;padding:0 1px">Расположение</div>
<div class="a" style="left:475px;top:251px;width:128px;height:92px;border:1px solid #dcdcdc"></div>
<div class="t" style="left:479.3px;top:247.27px;font-size:11.5px;color:#000;background:#f0f0f0;padding:0 1px">Тип</div>
<div class="a" style="left:613px;top:251px;width:113px;height:92px;border:1px solid #dcdcdc"></div>
<div class="t" style="left:617.2px;top:247.27px;font-size:11.5px;color:#6d6d6d;background:#f0f0f0;padding:0 1px">Единицы</div>
<svg class="a" style="left:369.0px;top:266.6px;" width="13" height="13" viewBox="0 0 13 13"><circle cx="6.5" cy="6.5" r="6" fill="#fff" stroke="#333"/></svg>
<div class="t" style="left:386.30px;top:267.57px;font-size:11.5px;color:#000;font-weight:400;">по с<u>т</u>рокам</div>
<svg class="a" style="left:369.0px;top:285.6px;" width="13" height="13" viewBox="0 0 13 13"><circle cx="6.5" cy="6.5" r="6" fill="#fff" stroke="#333"/><circle cx="6.5" cy="6.5" r="3.5" fill="#333"/></svg>
<div class="t" style="left:386.30px;top:286.57px;font-size:11.5px;color:#000;font-weight:400;">по сто<u>л</u>бцам</div>
<svg class="a" style="left:484.0px;top:266.6px;" width="13" height="13" viewBox="0 0 13 13"><circle cx="6.5" cy="6.5" r="6" fill="#fff" stroke="#333"/><circle cx="6.5" cy="6.5" r="3.5" fill="#333"/></svg>
<div class="t" style="left:501.30px;top:267.57px;font-size:11.5px;color:#000;font-weight:400;">ар<u>и</u>фметическая</div>
<svg class="a" style="left:484.0px;top:285.6px;" width="13" height="13" viewBox="0 0 13 13"><circle cx="6.5" cy="6.5" r="6" fill="#fff" stroke="#333"/></svg>
<div class="t" style="left:501.30px;top:286.57px;font-size:11.5px;color:#000;font-weight:400;"><u>г</u>еометрическая</div>
<svg class="a" style="left:484.0px;top:304.5px;" width="13" height="13" viewBox="0 0 13 13"><circle cx="6.5" cy="6.5" r="6" fill="#fff" stroke="#333"/></svg>
<div class="t" style="left:501.30px;top:305.47px;font-size:11.5px;color:#000;font-weight:400;">дат<u>ы</u></div>
<svg class="a" style="left:484.0px;top:323.1px;" width="13" height="13" viewBox="0 0 13 13"><circle cx="6.5" cy="6.5" r="6" fill="#fff" stroke="#333"/></svg>
<div class="t" style="left:501.30px;top:324.07px;font-size:11.5px;color:#000;font-weight:400;">а<u>в</u>тозаполнение</div>
<svg class="a" style="left:621.9px;top:266.6px;" width="13" height="13" viewBox="0 0 13 13"><circle cx="6.5" cy="6.5" r="6" fill="#fff" stroke="#bcbcbc"/><circle cx="6.5" cy="6.5" r="3.5" fill="#c2c2c2"/></svg>
<div class="t" style="left:639.20px;top:267.57px;font-size:11.5px;color:#6d6d6d;font-weight:400;">день</div>
<svg class="a" style="left:621.9px;top:285.6px;" width="13" height="13" viewBox="0 0 13 13"><circle cx="6.5" cy="6.5" r="6" fill="#fff" stroke="#bcbcbc"/></svg>
<div class="t" style="left:639.20px;top:286.57px;font-size:11.5px;color:#6d6d6d;font-weight:400;">рабочий день</div>
<svg class="a" style="left:621.9px;top:304.5px;" width="13" height="13" viewBox="0 0 13 13"><circle cx="6.5" cy="6.5" r="6" fill="#fff" stroke="#bcbcbc"/></svg>
<div class="t" style="left:639.20px;top:305.47px;font-size:11.5px;color:#6d6d6d;font-weight:400;">месяц</div>
<svg class="a" style="left:621.9px;top:323.1px;" width="13" height="13" viewBox="0 0 13 13"><circle cx="6.5" cy="6.5" r="6" fill="#fff" stroke="#bcbcbc"/></svg>
<div class="t" style="left:639.20px;top:324.07px;font-size:11.5px;color:#6d6d6d;font-weight:400;">год</div>
<div class="a" style="left:360px;top:354px;width:13px;height:13px;background:#fff;border:1px solid #333"></div>
<div class="t" style="left:377.30px;top:356.27px;font-size:11.5px;color:#000;font-weight:400;"><u>А</u>втоматическое определение шага</div>
<div class="t" style="left:360.40px;top:381.27px;font-size:11.5px;color:#000;font-weight:400;"><u>Ш</u>аг:</div>
<div class="a" style="left:394px;top:377px;width:97px;height:20px;background:#fff;border:1px solid #a0a0a0"></div>
<div class="a" style="left:397px;top:380px;width:7px;height:14px;background:#c8c8c8"></div>
<div class="t" style="left:397.50px;top:380.84px;font-size:12px;color:#000;font-weight:400;">1</div>
<div class="t" style="left:500.70px;top:381.27px;font-size:11.5px;color:#000;font-weight:400;">Предельное <u>з</u>начение:</div>
<div class="a" style="left:631px;top:377px;width:96px;height:20px;background:#fff;border:1px solid #a0a0a0"></div>
<div class="a" style="left:568px;top:405px;width:74px;height:22px;background:#e1e1e1;border:2px solid #0f78d7"></div>
<div class="t" style="left:405.00px;width:400px;text-align:center;top:411.07px;font-size:11.5px;color:#000;font-weight:400;">ОК</div>
<div class="a" style="left:652px;top:405px;width:74px;height:22px;background:#e1e1e1;border:1px solid #adadad"></div>
<div class="t" style="left:489.00px;width:400px;text-align:center;top:411.07px;font-size:11.5px;color:#000;font-weight:400;">Отмена</div>
<svg class="a" style="left:600px;top:400px;" width="100" height="110" viewBox="0 0 100 110"><defs><filter id="sh" x="-30%" y="-30%" width="160%" height="160%"><feGaussianBlur in="SourceAlpha" stdDeviation="2.2"/><feOffset dx="2" dy="3"/><feComponentTransfer><feFuncA type="linear" slope=".55"/></feComponentTransfer><feMerge><feMergeNode/><feMergeNode in="SourceGraphic"/></feMerge></filter></defs><path d="M16.1 21.9L45.9 36.5L39 42L70 82L63 89L30.6 49L22.3 54.5Z" fill="#f4434a" filter="url(#sh)"/></svg>
<svg class="a" style="left:640px;top:460px;" width="100" height="100" viewBox="0 0 100 100"><defs><filter id="sh2" x="-30%" y="-30%" width="160%" height="160%"><feGaussianBlur in="SourceAlpha" stdDeviation="2.5"/><feOffset dx="1" dy="3.5"/><feComponentTransfer><feFuncA type="linear" slope=".55"/></feComponentTransfer><feMerge><feMergeNode/><feMergeNode in="SourceGraphic"/></feMerge></filter></defs><circle cx="49.4" cy="45.9" r="34" fill="#0ea98b" filter="url(#sh2)"/><path d="M49.2 27.5H54.6V64H49V35L39.7 41V35.8Z" fill="#fff"/></svg>
<svg class="a" style="left:21px;top:500px;opacity:.6" width="66" height="58" viewBox="0 0 66 58"><rect x="1.5" y="1.5" width="62" height="49" rx="7" fill="none" stroke="#fff" stroke-width="1.5"/><rect x="4" y="3.8" width="57" height="43.5" rx="5" fill="none" stroke="#999" stroke-width="3"/><path d="M32 30L14 12" stroke="#909090" stroke-width="3.2"/><path d="M10 8.5L23 11.5L13.5 21Z" fill="#909090"/><path d="M12 36L9 39.5L12 43Z M37 36L40 39.5L37 43Z" fill="#c4c4c4"/><rect x="21" y="51.5" width="20" height="5" rx="2" fill="none" stroke="#b0b0b0"/></svg>
<svg class="a" style="left:0;top:0" width="863" height="577" viewBox="0 0 863 577"><g fill="none" stroke-linejoin="round" opacity=".8"><path d="M96.3 523.9Q96.3 517.4 102.8 517.4H109.2Q115.7 517.4 115.7 523.9V528.8Q115.7 535.3 109.2 535.3H102.8Q96.3 535.3 96.3 528.8Z M144.6 517.6H128.6Q123.6 517.6 123.6 522.5Q123.6 527.4 128.6 527.4H136.5Q141.6 527.4 141.6 531.3Q141.6 535.3 136.5 535.3H120.6" stroke="#fff" stroke-opacity=".55" stroke-width="9"/><path d="M96.3 523.9Q96.3 517.4 102.8 517.4H109.2Q115.7 517.4 115.7 523.9V528.8Q115.7 535.3 109.2 535.3H102.8Q96.3 535.3 96.3 528.8Z M144.6 517.6H128.6Q123.6 517.6 123.6 522.5Q123.6 527.4 128.6 527.4H136.5Q141.6 527.4 141.6 531.3Q141.6 535.3 136.5 535.3H120.6" stroke="#9a9a9a" stroke-opacity=".45" stroke-width="6.6"/><path d="M96.3 523.9Q96.3 517.4 102.8 517.4H109.2Q115.7 517.4 115.7 523.9V528.8Q115.7 535.3 109.2 535.3H102.8Q96.3 535.3 96.3 528.8Z M144.6 517.6H128.6Q123.6 517.6 123.6 522.5Q123.6 527.4 128.6 527.4H136.5Q141.6 527.4 141.6 531.3Q141.6 535.3 136.5 535.3H120.6" stroke="#f8b4c2" stroke-width="5.2"/><path d="M159.9 517V536.3M178.6 517V536.3M159.9 526.3H178.6 M199.7 535.8H191Q186.3 535.8 186.3 531V528Q186.3 523.2 191 523.2H197.4Q202.2 523.2 202.2 527.5V529.4H188.8 M208.3 515.8V536.3 M218.3 541.2V523.2H225.8Q230.5 523.2 230.5 528V531Q230.5 535.8 225.8 535.8H220.8 M252.5 535.8H243.8Q239 535.8 239 531V528Q239 523.2 243.8 523.2H250.1Q255 523.2 255 527.5V529.4H241.5 M261.7 536.3V528Q261.7 523.1 266.5 523.1H273.2" stroke="#fff" stroke-opacity=".5" stroke-width="8.5"/><path d="M159.9 517V536.3M178.6 517V536.3M159.9 526.3H178.6 M199.7 535.8H191Q186.3 535.8 186.3 531V528Q186.3 523.2 191 523.2H197.4Q202.2 523.2 202.2 527.5V529.4H188.8 M208.3 515.8V536.3 M218.3 541.2V523.2H225.8Q230.5 523.2 230.5 528V531Q230.5 535.8 225.8 535.8H220.8 M252.5 535.8H243.8Q239 535.8 239 531V528Q239 523.2 243.8 523.2H250.1Q255 523.2 255 527.5V529.4H241.5 M261.7 536.3V528Q261.7 523.1 266.5 523.1H273.2" stroke="#8a8a8a" stroke-opacity=".9" stroke-width="7" stroke-linecap="square"/><path d="M159.9 517V536.3M178.6 517V536.3M159.9 526.3H178.6 M199.7 535.8H191Q186.3 535.8 186.3 531V528Q186.3 523.2 191 523.2H197.4Q202.2 523.2 202.2 527.5V529.4H188.8 M208.3 515.8V536.3 M218.3 541.2V523.2H225.8Q230.5 523.2 230.5 528V531Q230.5 535.8 225.8 535.8H220.8 M252.5 535.8H243.8Q239 535.8 239 531V528Q239 523.2 243.8 523.2H250.1Q255 523.2 255 527.5V529.4H241.5 M261.7 536.3V528Q261.7 523.1 266.5 523.1H273.2" stroke="#f6f6f6" stroke-opacity=".92" stroke-width="5" stroke-linecap="square"/></g></svg>
<svg class="a" style="left:194px;top:532px;opacity:.85" width="16" height="16" viewBox="0 0 16 16"><circle cx="8" cy="8" r="7.3" fill="none" stroke="#666" stroke-width="1"/><path d="M8 4V12M4 8H12" stroke="#555" stroke-width="1.7"/></svg>
</body></html>
